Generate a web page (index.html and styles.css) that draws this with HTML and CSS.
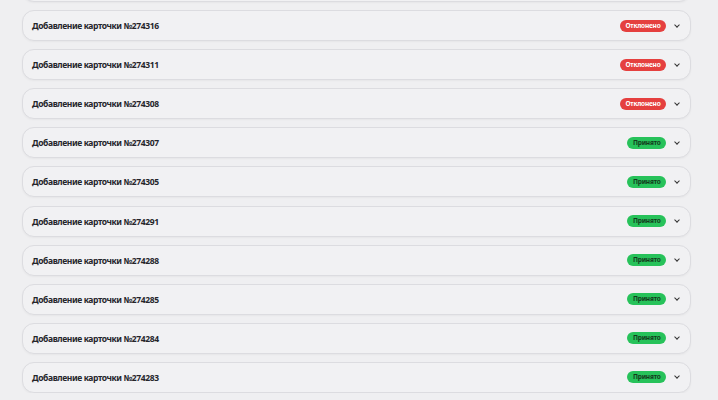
FILE: index.html
```html
<!DOCTYPE html>
<html lang="ru">
  <head>
    <meta charset="UTF-8" />
    <meta name="viewport" content="width=device-width, initial-scale=1.0" />
    <title>Заявки</title>
    <link rel="stylesheet" href="styles.css">
  </head>
  <body>
    <div class="list">
      <!-- previous card, scrolled past the top edge -->
      <div class="card"></div>
      <div class="card"><span class="title">Добавление карточки №274316</span><span class="badge rejected">Отклонено</span><span class="chev"></span></div>
      <div class="card"><span class="title">Добавление карточки №274311</span><span class="badge rejected">Отклонено</span><span class="chev"></span></div>
      <div class="card"><span class="title">Добавление карточки №274308</span><span class="badge rejected">Отклонено</span><span class="chev"></span></div>
      <div class="card"><span class="title">Добавление карточки №274307</span><span class="badge accepted">Принято</span><span class="chev"></span></div>
      <div class="card"><span class="title">Добавление карточки №274305</span><span class="badge accepted">Принято</span><span class="chev"></span></div>
      <div class="card"><span class="title">Добавление карточки №274291</span><span class="badge accepted">Принято</span><span class="chev"></span></div>
      <div class="card"><span class="title">Добавление карточки №274288</span><span class="badge accepted">Принято</span><span class="chev"></span></div>
      <div class="card"><span class="title">Добавление карточки №274285</span><span class="badge accepted">Принято</span><span class="chev"></span></div>
      <div class="card"><span class="title">Добавление карточки №274284</span><span class="badge accepted">Принято</span><span class="chev"></span></div>
      <div class="card"><span class="title">Добавление карточки №274283</span><span class="badge accepted">Принято</span><span class="chev"></span></div>
    </div>
  </body>
</html>
```

FILE: styles.css
```css
body {
  margin: 0;
  background: #efeff1;
  font-family: "Noto Sans", sans-serif;
  color: #25252b;
  overflow: hidden;
}
.list {
  width: 669px;
  margin: -29px 0 0 22px;
  display: flex;
  flex-direction: column;
  gap: 8.1px;
}
.card {
  box-sizing: border-box;
  height: 31px;
  display: flex;
  align-items: center;
  padding: 0 11px 0 9px;
  background: #f1f1f3;
  border: 1px solid #dcdce0;
  border-radius: 12px;
  box-shadow: 0 1px 2px rgba(0, 0, 0, 0.04);
}
.title {
  flex: 1;
  font-size: 8.5px;
  font-weight: 700;
  letter-spacing: -0.4px;
}
.badge {
  height: 12px;
  line-height: 12px;
  padding: 0 5.5px;
  border-radius: 6px;
  font-size: 6.5px;
  font-weight: 700;
  letter-spacing: -0.2px;
}
.rejected {
  background: #e5403f;
  color: #fff;
}
.accepted {
  background: #27c25a;
  color: #133a1d;
}
.chev {
  width: 3px;
  height: 3px;
  margin: -2px 0 0 9px;
  border-right: 1.2px solid #333;
  border-bottom: 1.2px solid #333;
  transform: rotate(45deg);
}
```
